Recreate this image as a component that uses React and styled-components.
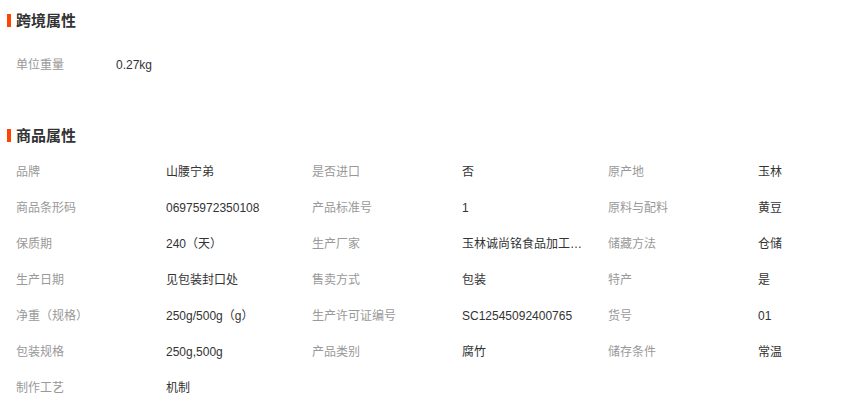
import React from "react";
import styled, { createGlobalStyle } from "styled-components";

const Global = createGlobalStyle`
  html, body { margin: 0; padding: 0; background: #fff; }
  body { font-family: "Liberation Sans", "Noto Sans CJK SC", sans-serif; }
`;

const Page = styled.div`
  width: 848px;
  height: 413px;
  padding-top: 9px;
  box-sizing: border-box;
  overflow: hidden;
`;

const Section = styled.section`
  margin-bottom: ${(p) => p.$after || 0}px;
`;

const Title = styled.h3`
  display: flex;
  align-items: center;
  gap: 5px;
  margin: 0 0 ${(p) => p.$gap}px 7px;
  height: 20px;
  font-family: "Noto Sans CJK SC", sans-serif;
  font-size: 15px;
  font-weight: 700;
  color: #333;
  &::before {
    content: "";
    width: 4px;
    height: 13px;
    margin-top: 3px;
    background: #ff4400;
  }
`;

const Grid = styled.div`
  display: grid;
  grid-template-columns: ${(p) => p.$cols};
  padding-left: 16px;
`;

const Cell = styled.div`
  height: 36px;
  line-height: 36px;
  font-size: 12px;
  color: ${(p) => (p.$label ? "#999" : "#333")};
  white-space: nowrap;
  overflow: hidden;
  text-overflow: ellipsis;
  max-width: ${(p) => (p.$label ? "none" : "124px")};
`;

const cross = [["单位重量", "0.27kg"]];

const props = [
  ["品牌", "山腰宁弟", "是否进口", "否", "原产地", "玉林"],
  ["商品条形码", "06975972350108", "产品标准号", "1", "原料与配料", "黄豆"],
  ["保质期", "240（天）", "生产厂家", "玉林诚尚铭食品加工有限公司", "储藏方法", "仓储"],
  ["生产日期", "见包装封口处", "售卖方式", "包装", "特产", "是"],
  ["净重（规格）", "250g/500g（g）", "生产许可证编号", "SC12545092400765", "货号", "01"],
  ["包装规格", "250g,500g", "产品类别", "腐竹", "储存条件", "常温"],
  ["制作工艺", "机制"],
];

export default function App() {
  return (
    <Page>
      <Global />
      <Section $after={41}>
        <Title $gap={18}>跨境属性</Title>
        <Grid $cols="100px 1fr">
          {cross.map((r) =>
            r.map((t, i) => (
              <Cell key={t} $label={i % 2 === 0}>
                {t}
              </Cell>
            ))
          )}
        </Grid>
      </Section>
      <Section>
        <Title $gap={10}>商品属性</Title>
        <Grid $cols="150px 146px 150px 146px 150px 90px">
          {props.map((r, ri) =>
            r.map((t, i) => (
              <Cell key={ri + "-" + i} $label={i % 2 === 0} title={t}>
                {t}
              </Cell>
            ))
          )}
        </Grid>
      </Section>
    </Page>
  );
}
